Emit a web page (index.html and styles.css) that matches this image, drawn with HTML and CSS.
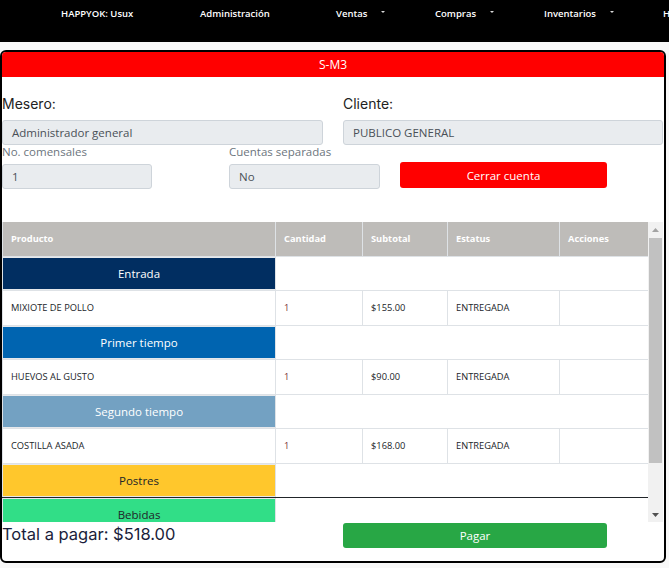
FILE: index.html
```html
<!DOCTYPE html>
<html lang="es">
<head>
<meta charset="utf-8">
<title>HAPPYOK</title>
<link rel="stylesheet" href="styles.css">
</head>
<body>
<nav class="topnav">
  <span class="nav-item">HAPPYOK: Usux</span>
  <span class="nav-item">Administración</span>
  <span class="nav-item">Ventas<i class="caret"></i></span>
  <span class="nav-item">Compras<i class="caret"></i></span>
  <span class="nav-item">Inventarios<i class="caret"></i></span>
  <span class="nav-item">H</span>
</nav>

<main class="card">
  <header class="card-head">S-M3</header>

  <section class="form-top">
    <div class="field">
      <label class="big-label">Mesero:</label>
      <div class="input">Administrador general</div>
    </div>
    <div class="field">
      <label class="big-label">Cliente:</label>
      <div class="input">PUBLICO GENERAL</div>
    </div>
  </section>

  <section class="form-second">
    <div class="field">
      <label class="small-label">No. comensales</label>
      <div class="input w150">1</div>
    </div>
    <div class="field">
      <label class="small-label">Cuentas separadas</label>
      <div class="input w151">No</div>
    </div>
    <div class="field">
      <button class="btn btn-red">Cerrar cuenta</button>
    </div>
  </section>

  <div class="table-box">
    <div class="table-view">
      <table class="orders">
        <colgroup>
          <col class="c1"><col class="c2"><col class="c3"><col class="c4"><col class="c5">
        </colgroup>
        <thead>
          <tr><th>Producto</th><th>Cantidad</th><th>Subtotal</th><th>Estatus</th><th>Acciones</th></tr>
        </thead>
        <tbody>
          <tr class="cat"><td class="cat-cell entrada">Entrada</td><td class="blank" colspan="4"></td></tr>
          <tr class="item"><td>MIXIOTE DE POLLO</td><td class="qty">1</td><td>$155.00</td><td>ENTREGADA</td><td></td></tr>
          <tr class="cat"><td class="cat-cell primer">Primer tiempo</td><td class="blank" colspan="4"></td></tr>
          <tr class="item"><td>HUEVOS AL GUSTO</td><td class="qty">1</td><td>$90.00</td><td>ENTREGADA</td><td></td></tr>
          <tr class="cat"><td class="cat-cell segundo">Segundo tiempo</td><td class="blank" colspan="4"></td></tr>
          <tr class="item"><td>COSTILLA ASADA</td><td class="qty">1</td><td>$168.00</td><td>ENTREGADA</td><td></td></tr>
          <tr class="cat last-before"><td class="cat-cell postres">Postres</td><td class="blank" colspan="4"></td></tr>
          <tr class="cat"><td class="cat-cell bebidas">Bebidas</td><td class="blank" colspan="4"></td></tr>
        </tbody>
      </table>
    </div>
    <div class="scrollbar" aria-hidden="true">
      <div class="sb-btn">
        <svg width="7" height="4" viewBox="0 0 7 4"><polygon points="0,4 7,4 3.5,0" fill="#a3a3a3"/></svg>
      </div>
      <div class="sb-track">
        <div class="sb-thumb"></div>
      </div>
      <div class="sb-btn">
        <svg width="7" height="4" viewBox="0 0 7 4"><polygon points="0,0 7,0 3.5,4" fill="#505050"/></svg>
      </div>
    </div>
  </div>

  <footer class="card-foot">
    <div class="total">Total a pagar: $518.00</div>
    <button class="btn btn-green">Pagar</button>
  </footer>
</main>
</body>
</html>
```

FILE: styles.css
```css
* { box-sizing: border-box; }

html, body {
  margin: 0;
  padding: 0;
  background: #f8f8f8;
  font-family: "Open Sans", "Liberation Sans", sans-serif;
  color: #212529;
  overflow: hidden;
}

.topnav {
  height: 42px;
  background: #000;
  color: #fff;
  display: grid;
  grid-template-columns: 139px 136px 99px 109px 119px 20px;
  padding: 7px 0 0 61px;
  font-size: 9.5px;
  font-weight: 600;
  line-height: 14px;
  white-space: nowrap;
  overflow: hidden;
}

.nav-item { display: inline-flex; align-items: center; height: 14px; }

.caret {
  display: inline-block;
  margin-left: 14px;
  width: 0;
  height: 0;
  border-left: 2px solid transparent;
  border-right: 2px solid transparent;
  border-top: 2px solid #d8d8d8;
  margin-top: -5px;
}

.card {
  margin-top: 8px;
  width: 666px;
  border: 2px solid #000;
  border-radius: 6px;
  background: #fff;
  padding-bottom: 11px;
}

.card-head {
  height: 25px;
  background: #ff0000;
  color: #fff;
  font-size: 12px;
  line-height: 25px;
  text-align: center;
  border-radius: 4px 4px 0 0;
}

.form-top {
  display: grid;
  grid-template-columns: 321px 320px;
  column-gap: 20px;
  padding: 17px 0 0 0;
}

.big-label {
  display: block;
  font-family: Inter, "Noto Sans", sans-serif;
  font-size: 14px;
  line-height: 20px;
  color: #222;
  margin-bottom: 6px;
}

.input {
  height: 25px;
  background: #e9ecef;
  border: 1px solid #ced4da;
  border-radius: 3px;
  font-size: 11.5px;
  line-height: 23px;
  padding-left: 9px;
  color: #495057;
}

.w150 { width: 150px; }
.w151 { width: 151px; }

.form-second {
  display: grid;
  grid-template-columns: 227px 171px 207px;
}

.small-label {
  display: block;
  font-size: 11.5px;
  line-height: 13px;
  color: #6c757d;
  margin-bottom: 6px;
  white-space: nowrap;
}

.btn {
  display: block;
  border: none;
  border-radius: 3px;
  color: #fff;
  font-family: "Open Sans", "Liberation Sans", sans-serif;
  font-size: 11.5px;
  padding: 0;
  cursor: pointer;
}

.btn-red {
  width: 207px;
  height: 26px;
  margin-top: 17px;
  background: #ff0000;
}

.table-box {
  margin-top: 33px;
  width: 661px;
  height: 300px;
  display: flex;
}

.table-view {
  width: 646px;
  height: 300px;
  overflow: hidden;
}

.scrollbar {
  width: 15px;
  height: 300px;
  background: #f1f1f1;
  display: flex;
  flex-direction: column;
}

.sb-btn {
  height: 15px;
  display: flex;
  align-items: center;
  justify-content: center;
}

.sb-track {
  flex: 1;
  padding: 1px 1px 0 1px;
}

.sb-thumb {
  height: 225px;
  background: #c1c1c1;
}

.orders {
  width: 646px;
  table-layout: fixed;
  border-collapse: collapse;
  font-size: 9.3px;
}

.c1 { width: 273px; }
.c2 { width: 87px; }
.c3 { width: 85px; }
.c4 { width: 112px; }
.c5 { width: 89px; }

.orders th {
  height: 34px;
  background: #bebcb9;
  color: #fff;
  font-weight: 700;
  font-size: 9.3px;
  text-align: left;
  padding: 0 8px;
  border: 1px solid #dee2e6;
  border-top: none;
}

.orders td {
  border: 1px solid #dee2e6;
  padding: 0 8px;
  color: #212529;
}

.item td { height: 35px; }

.cat td { height: 34px; }

.cat td.blank {
  border-left: none;
  border-right: none;
  border-top: none;
}

.qty { color: #7a2f35 !important; }

.cat-cell {
  text-align: center;
  font-size: 11.5px;
  color: #fff !important;
  box-shadow: inset 0 1px 0 #e6e8eb, inset 0 -1px 0 #e6e8eb;
}

.entrada { background: #012e61; }
.primer { background: #0064b0; }
.segundo { background: #73a1c2; }
.postres { background: #ffc72c; color: #212529 !important; }
.bebidas { background: #31de87; color: #212529 !important; }

.last-before td { border-bottom: 1px solid #212529; }

.card-foot {
  display: flex;
  align-items: center;
  height: 26px;
  margin-bottom: 2px;
}

.total {
  width: 341px;
  font-family: Inter, "Noto Sans", sans-serif;
  font-size: 16.5px;
  color: #1a1d3a;
  margin-top: -2px;
}

.btn-green {
  width: 264px;
  height: 25px;
  background: #28a745;
  margin-top: 1px;
}
```
